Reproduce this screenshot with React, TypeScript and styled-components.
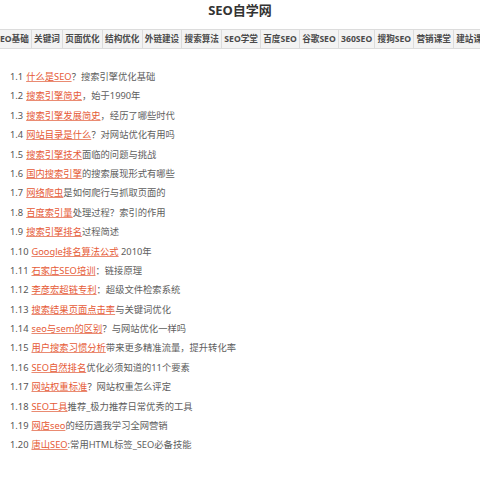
import React from "react";
import styled, { createGlobalStyle } from "styled-components";

const GlobalStyle = createGlobalStyle`
  html, body {
    margin: 0;
    padding: 0;
    background: #ffffff;
  }
  body {
    font-family: "Noto Sans", "Noto Sans CJK SC", sans-serif;
  }
`;

const navItems = [
  "SEO基础",
  "关键词",
  "页面优化",
  "结构优化",
  "外链建设",
  "搜索算法",
  "SEO学堂",
  "百度SEO",
  "谷歌SEO",
  "360SEO",
  "搜狗SEO",
  "营销课堂",
  "建站课堂",
];

const lessons = [
  { no: "1.1", link: "什么是SEO", rest: "？搜索引擎优化基础" },
  { no: "1.2", link: "搜索引擎简史", rest: "，始于1990年" },
  { no: "1.3", link: "搜索引擎发展简史", rest: "，经历了哪些时代" },
  { no: "1.4", link: "网站目录是什么", rest: "？对网站优化有用吗" },
  { no: "1.5", link: "搜索引擎技术", rest: "面临的问题与挑战" },
  { no: "1.6", link: "国内搜索引擎", rest: "的搜索展现形式有哪些" },
  { no: "1.7", link: "网络爬虫", rest: "是如何爬行与抓取页面的" },
  { no: "1.8", link: "百度索引量", rest: "处理过程？索引的作用" },
  { no: "1.9", link: "搜索引擎排名", rest: "过程简述" },
  { no: "1.10", link: "Google排名算法公式", rest: " 2010年" },
  { no: "1.11", link: "石家庄SEO培训", rest: "：链接原理" },
  { no: "1.12", link: "李彦宏超链专利", rest: "：超级文件检索系统" },
  { no: "1.13", link: "搜索结果页面点击率", rest: "与关键词优化" },
  { no: "1.14", link: "seo与sem的区别", rest: "？与网站优化一样吗" },
  { no: "1.15", link: "用户搜索习惯分析", rest: "带来更多精准流量，提升转化率" },
  { no: "1.16", link: "SEO自然排名", rest: "优化必须知道的11个要素" },
  { no: "1.17", link: "网站权重标准", rest: "？网站权重怎么评定" },
  { no: "1.18", link: "SEO工具", rest: "推荐_极力推荐日常优秀的工具" },
  { no: "1.19", link: "网店seo", rest: "的经历遇我学习全网营销" },
  { no: "1.20", link: "唐山SEO", rest: ":常用HTML标签_SEO必备技能" },
];

const Page = styled.div`
  width: 480px;
  overflow: hidden;
`;

const Title = styled.h1`
  margin: 0;
  padding-top: 1px;
  height: 23px;
  line-height: 18px;
  text-align: center;
  font-size: 13px;
  font-weight: 700;
  color: #333333;
`;

const NavWrap = styled.div`
  margin-top: 5px;
  width: 480px;
  overflow: hidden;
`;

const NavRow = styled.ul`
  display: flex;
  margin: 0 0 0 -7px;
  padding: 0;
  list-style: none;
  background: #f3f3f3;
  border-top: 1px solid #dcdcdc;
  border-bottom: 1px solid #dcdcdc;
  width: max-content;
`;

const NavCell = styled.li`
  flex-shrink: 0;
  height: 18px;
  line-height: 18px;
  padding: 0 2.2px;
  font-size: 8.6px;
  font-weight: 700;
  color: #4a4a4a;
  border-right: 1px solid #dcdcdc;
  white-space: nowrap;
`;

const List = styled.ol`
  margin: 18px 0 0;
  padding: 0 0 0 10px;
  list-style: none;
`;

const Item = styled.li`
  height: 19.4px;
  line-height: 19.4px;
  font-size: 9.3px;
  color: #5e5e5e;
  white-space: nowrap;
`;

const Num = styled.span`
  color: #555555;
  margin-right: 3px;
`;

const Link = styled.a`
  color: #e65a36;
  text-decoration: underline;
  text-decoration-color: #ea8b72;
  text-underline-offset: 1px;
`;

const App: React.FC = () => {
  return (
    <>
      <GlobalStyle />
      <Page>
        <Title>SEO自学网</Title>
        <NavWrap>
          <NavRow>
            {navItems.map((name) => (
              <NavCell key={name}>{name}</NavCell>
            ))}
          </NavRow>
        </NavWrap>
        <List>
          {lessons.map((l) => (
            <Item key={l.no}>
              <Num>{l.no}</Num>
              <Link href="#">{l.link}</Link>
              {l.rest}
            </Item>
          ))}
        </List>
      </Page>
    </>
  );
};

export default App;
